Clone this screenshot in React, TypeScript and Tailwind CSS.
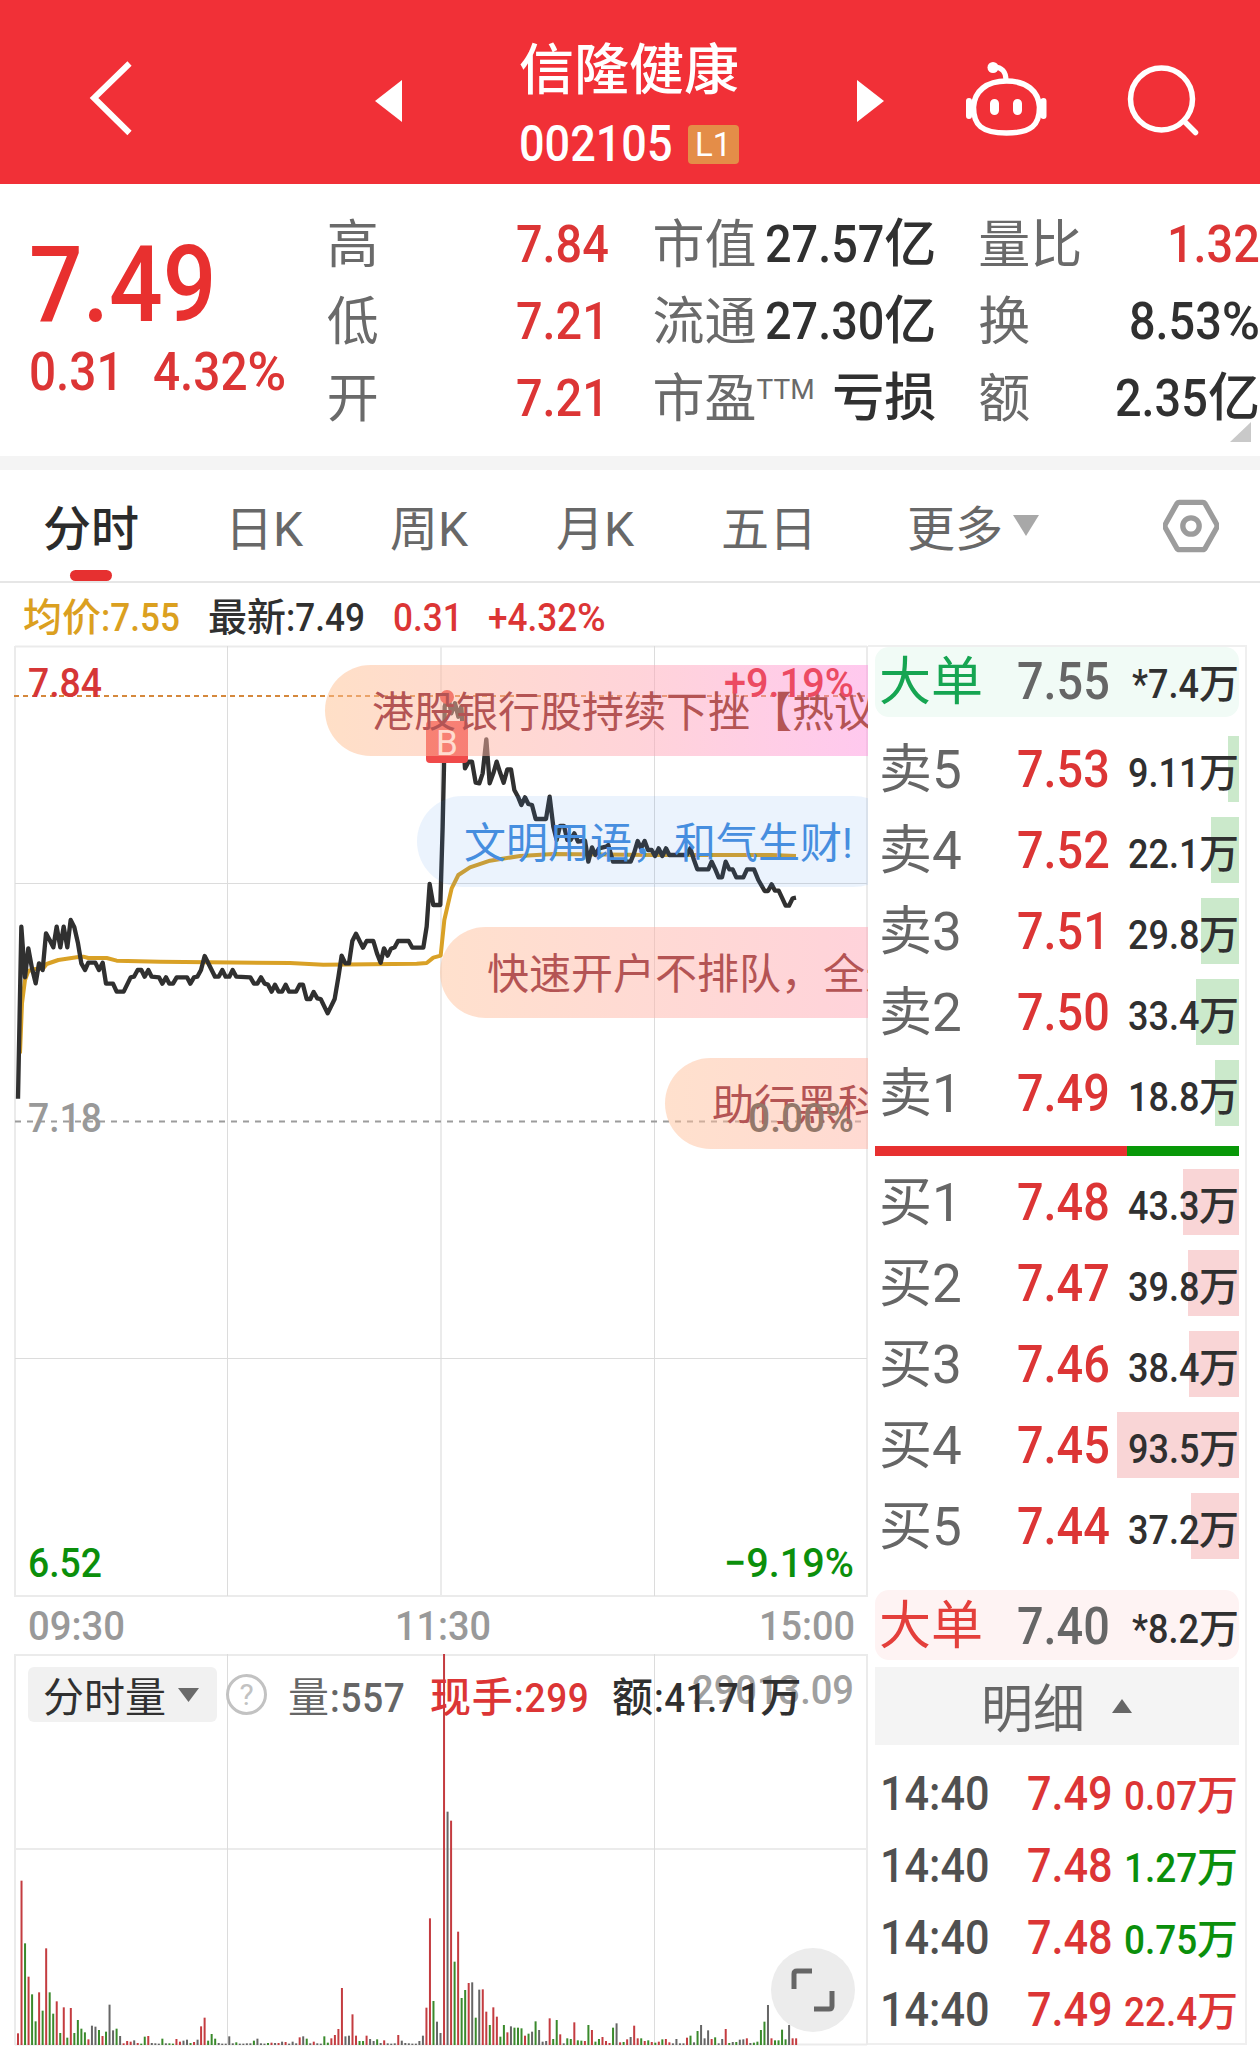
import * as React from "react";
import clsx from "clsx";

const UP = "text-[#dc3535]";
const DOWN = "text-[#0b8f0b]";

const TABS = [
  { label: "分时", width: "w-[182px]" },
  { label: "日K", width: "w-[165px]" },
  { label: "周K", width: "w-[166px]" },
  { label: "月K", width: "w-[165px]" },
  { label: "五日", width: "w-[186px]" },
];

const SELLS = [
  { label: "卖5", price: "7.53", vol: "9.11万", bar: 11 },
  { label: "卖4", price: "7.52", vol: "22.1万", bar: 28 },
  { label: "卖3", price: "7.51", vol: "29.8万", bar: 38 },
  { label: "卖2", price: "7.50", vol: "33.4万", bar: 43 },
  { label: "卖1", price: "7.49", vol: "18.8万", bar: 24 },
];

const BUYS = [
  { label: "买1", price: "7.48", vol: "43.3万", bar: 56 },
  { label: "买2", price: "7.47", vol: "39.8万", bar: 51 },
  { label: "买3", price: "7.46", vol: "38.4万", bar: 50 },
  { label: "买4", price: "7.45", vol: "93.5万", bar: 122 },
  { label: "买5", price: "7.44", vol: "37.2万", bar: 48 },
];

const DEALS = [
  { time: "14:40", price: "7.49", vol: "0.07万", up: true },
  { time: "14:40", price: "7.48", vol: "1.27万", up: false },
  { time: "14:40", price: "7.48", vol: "0.75万", up: false },
  { time: "14:40", price: "7.49", vol: "22.4万", up: true },
];

// chart series are stored in thirds of a pixel
const PRICE =
  "54,-564 64,-1080 75,-928 85,-1015 96,-955 107,-910 117,-970 128,-950 138,-1060 149,-1040 160,-1018 170,-1080 181,-1018 191,-1080 202,-1018 212,-1100 223,-1078 234,-1030 244,-970 255,-950 265,-972 286,-972 297,-950 308,-972 318,-909 339,-909 350,-885 371,-885 392,-928 402,-930 413,-950 424,-950 434,-930 445,-950 455,-930 477,-928 487,-909 498,-928 508,-909 519,-909 530,-928 561,-928 571,-909 582,-928 592,-930 603,-950 614,-992 635,-950 645,-930 656,-930 667,-950 677,-930 688,-930 698,-950 709,-930 751,-928 762,-909 772,-909 783,-928 794,-909 804,-906 815,-885 825,-906 836,-885 846,-885 857,-906 867,-885 888,-885 899,-906 909,-906 920,-863 931,-863 941,-884 952,-865 962,-863 983,-820 1004,-863 1015,-928 1025,-993 1036,-970 1047,-970 1057,-1037 1068,-1059 1089,-1017 1100,-1037 1120,-1037 1131,-1000 1142,-972 1152,-1015 1163,-993 1173,-1014 1184,-1018 1194,-1037 1226,-1037 1237,-1017 1270,-1017 1280,-1080 1289,-1208 1300,-1145 1321,-1145 1328,-1380 1332,-1560 1334,-1740 1344,-1775 1354,-1720 1365,-1750 1375,-1710 1384,-1740 1395,-1555 1406,-1575 1416,-1575 1427,-1512 1438,-1510 1448,-1540 1459,-1642 1469,-1510 1480,-1540 1490,-1575 1501,-1540 1511,-1512 1522,-1552 1533,-1552 1543,-1490 1554,-1470 1564,-1445 1575,-1468 1585,-1448 1596,-1445 1607,-1403 1638,-1403 1649,-1470 1660,-1380 1670,-1340 1680,-1382 1692,-1382 1702,-1340 1712,-1340 1723,-1360 1734,-1335 1755,-1338 1765,-1275 1776,-1318 1786,-1295 1797,-1315 1818,-1320 1825,-1325 1839,-1275 1892,-1275 1902,-1300 1913,-1337 1923,-1315 1934,-1337 1944,-1310 1955,-1310 1965,-1292 1976,-1315 1987,-1292 1998,-1315 2008,-1295 2060,-1295 2071,-1315 2082,-1280 2092,-1252 2125,-1252 2135,-1275 2146,-1252 2156,-1228 2166,-1228 2177,-1275 2188,-1252 2198,-1252 2209,-1228 2230,-1228 2241,-1252 2262,-1252 2275,-1220 2294,-1187 2304,-1187 2315,-1207 2325,-1188 2336,-1188 2347,-1165 2357,-1143 2367,-1143 2378,-1165 2388,-1167";

const AVERAGE =
  "60,-700 66,-850 75,-920 85,-947 100,-952 130,-955 140,-968 175,-980 230,-988 250,-990 265,-986 320,-986 350,-978 480,-975 870,-971 970,-966 1250,-969 1280,-971 1300,-987 1322,-993 1333,-1100 1355,-1195 1375,-1235 1410,-1258 1470,-1278 1560,-1292 1660,-1298 1960,-1295 2315,-1295 2388,-1292";

const VOLUMES =
  "35r 493r 305g 205r 152g 71g 158r 103g 290r 158g 94g 131r 36g 113r 22g 111r 36g 75g 49g 38g 17r 58k 55k 45g 27r 40g 121k 44k 49g 27k 5r 12r 10r 14k 6r 4g 25g 27r 6k 5k 4k 19g 5k 5g 4g 18r 10r 13k 16k 6g 9r 16k 56r 82r 13g 33g 19g 6k 4k 4k 26k 5k 8g 4k 4k 5k 5k 13g 19k 5k 4k 6g 7r 6k 6r 10k 9r 4k 10k 5k 23r 26k 19g 5k 10r 5k 4k 26g 7g 20r 30r 48r 171r 26k 28k 92r 28r 12g 12g 28r 18k 12k 17g 6k 14r 5k 4k 5k 30r 13k 6k 5k 4k 4k 12k 28k 112r 380r 132g 70k 36k 1173r 700k 673r 250g 340r 141g 165g 186r 188k 82g 166k 167r 100r 60g 113r 85r 25g 60g 38r 56k 52g 52g 50g 28r 34g 40k 71g 45k 10k 12k 80r 18g 75g 32r 5k 20g 18g 68r 14g 13g 12r 60g 45r 10g 18g 24r 12r 6r 52g 65k 8r 9g 17r 24k 58r 20r 20g 12r 14g 9r 7g 10r 17g 18r 8r 5k 18k 5k 5k 22r 28g 8k 42g 60k 20k 44k 18r 23g 5k 18k 48r 6g 9k 9g 16k 17k 20r 6k 7g 10g 45g 70g 120k 20r 14g 14g 46g 17g 60k 20r 20r";

const BAR_COLORS: Record<string, string> = { r: "#c43c40", g: "#3a8a2c", k: "#666666" };

const ADVANCES: Record<string, number> = { ".": 0.277, ":": 0.264, "*": 0.445, "+": 0.557 };

// narrow figures; the negative margin gives back the width taken off by the scale
function Num({ children }: { children: string }) {
  const width = [...children].reduce((sum, c) => sum + (ADVANCES[c] ?? 0.568), 0);
  return (
    <span className="inline-block origin-left scale-x-[0.9]" style={{ marginRight: `${-width * 0.1}em` }}>
      {children}
    </span>
  );
}

function Figures({ text }: { text: string }) {
  return (
    <span className="whitespace-nowrap">
      {text.split(/([\d.:*+]+)/).map((part, i) => (i % 2 ? <Num key={i}>{part}</Num> : part))}
    </span>
  );
}

function Header() {
  return (
    <header className="flex h-[184px] items-center bg-[#f13037] text-white">
      <svg className="ml-[84px] mt-3 h-[80px] w-[54px]" viewBox="84 58 54 80" fill="none" stroke="currentColor">
        <path d="M129.5 63.500 94 98l35.500 35" strokeWidth="6" />
      </svg>
      <svg className="ml-[237px] mt-[18px] h-[42px] w-[27px]" viewBox="0 0 27 42" fill="currentColor">
        <path d="M27 0v42L0 21z" />
      </svg>
      <div className="ml-[102px] flex w-[250px] flex-col items-center pt-[19px]">
        <h1 className="text-[55px] font-medium leading-[62px]">信隆健康</h1>
        <div className="mt-[23px] flex h-[40px] items-center gap-[15px]">
          <span className="text-[50px] font-medium leading-none">
            <Figures text="002105" />
          </span>
          <span className="flex h-[39px] w-[51px] items-center justify-center rounded-[4px] bg-[#e48d48] text-[33px] leading-none">
            L1
          </span>
        </div>
      </div>
      <svg className="ml-[103px] mt-[18px] h-[42px] w-[27px]" viewBox="0 0 27 42" fill="currentColor">
        <path d="M0 0v42l27-21z" />
      </svg>
      <svg className="ml-[78px] mt-[14px] h-[80px] w-[88px]" viewBox="961 59 88 80" fill="none" stroke="currentColor">
        <path
          d="M1005.500 81c20 0 32 10 33 26 0 18-8 26-33 26s-33-8-33-26c1-16 13-26 33-26z"
          strokeWidth="5.500"
        />
        <path d="M968 101v15M1042.500 101v15" strokeWidth="6" strokeLinecap="round" />
        <path d="M1005 80c0-8-4-13-12-13" strokeWidth="5" />
        <circle cx="992" cy="67.500" r="5.500" fill="currentColor" stroke="none" />
        <path d="M993.500 103.500v7M1016.500 103.500v7" strokeWidth="9" strokeLinecap="round" />
      </svg>
      <svg className="ml-[73px] mt-[14px] h-[80px] w-[80px]" viewBox="1122 59 80 80" fill="none" stroke="currentColor">
        <circle cx="1160.500" cy="99" r="31" strokeWidth="5.500" />
        <path d="m1183 121 11.500 11.500" strokeWidth="5.500" strokeLinecap="round" />
      </svg>
    </header>
  );
}

interface StatProps {
  label: React.ReactNode;
  value: string;
  up?: boolean;
}

function Stat({ label, value, up }: StatProps) {
  return (
    <div className="flex h-[77px] items-center justify-between">
      <span className="pt-[2px] text-[#6a6a6a]">{label}</span>
      <span className={clsx("font-medium", up ? UP : "text-[#303030]")}>
        <Figures text={value} />
      </span>
    </div>
  );
}

function Quote() {
  return (
    <section className="relative flex h-[272px] pt-[22px] text-[52px] leading-none">
      <div className={clsx("w-[327px] pl-[29px] font-medium", UP)}>
        <div className="mt-[28px] text-[105px] leading-[104px] text-[#e8302f]">
          <Figures text="7.49" />
        </div>
        <div className="mt-[7px] flex gap-[29px] text-[53px] leading-[54px]">
          <Figures text="0.31" />
          <Figures text="4.32%" />
        </div>
      </div>
      <div className="w-[282px]">
        <Stat label="高" value="7.84" up />
        <Stat label="低" value="7.21" up />
        <Stat label="开" value="7.21" up />
      </div>
      <div className="ml-[44px] w-[284px]">
        <Stat label="市值" value="27.57亿" />
        <Stat label="流通" value="27.30亿" />
        <Stat
          label={
            <>
              市盈<span className="relative top-[-18px] text-[28px]">TTM</span>
            </>
          }
          value="亏损"
        />
      </div>
      <div className="ml-[42px] w-[282px]">
        <Stat label="量比" value="1.32" up />
        <Stat label="换" value="8.53%" />
        <Stat label="额" value="2.35亿" />
      </div>
      <svg className="absolute bottom-[14px] right-[9px] h-[20px] w-[21px]" viewBox="0 0 21 20" fill="#c9c9c9">
        <path d="M21 0v20H0z" />
      </svg>
    </section>
  );
}

function Tabs() {
  return (
    <nav className="flex h-[113px] items-center border-b-2 border-[#e6e6e6] pl-[43px] text-[48px] leading-none text-[#686868]">
      {TABS.map((tab, i) => (
        <div
          key={tab.label}
          className={clsx(
            "relative flex h-full items-center pt-[8px]",
            tab.width,
            i === 0 && "font-medium text-[#2b2b2b]",
          )}
        >
          {tab.label}
          {i === 0 && <span className="absolute bottom-0 left-[27px] h-[11px] w-[42px] rounded-[6px] bg-[#e63030]" />}
        </div>
      ))}
      <span className="pt-[8px]">更多</span>
      <svg className="ml-[10px] h-[21px] w-[26px]" viewBox="0 0 26 21" fill="#a8a8a8">
        <path d="M0 0h26L13 21z" />
      </svg>
      <svg className="ml-[124px] h-[54px] w-[56px]" viewBox="1 1 58 56" fill="none" stroke="#9c9c9c" strokeWidth="5.500">
        <path d="M18 4.500h24q2 0 3 2L56 26q2 3 0 6L45 51.500q-1 2-3 2H18q-2 0-3-2L4 32q-2-3 0-6L15 6.500q1-2 3-2z" />
        <circle cx="30" cy="29" r="8.500" />
      </svg>
    </nav>
  );
}

function InfoLine() {
  return (
    <div className="flex h-[62px] items-center pl-[23px] pt-[9px] text-[39px] font-medium leading-none">
      <span className="w-[185px] text-[#dba01f]">
        <Figures text="均价:7.55" />
      </span>
      <span className="w-[185px] text-[#303030]">
        <Figures text="最新:7.49" />
      </span>
      <span className={clsx("w-[95px]", UP)}>
        <Figures text="0.31" />
      </span>
      <span className={UP}>
        <Figures text="+4.32%" />
      </span>
    </div>
  );
}

interface AxisLabelProps {
  x: number;
  y: number;
  width: number;
  fill: string;
  children: string;
}

function AxisLabel({ x, y, width, fill, children }: AxisLabelProps) {
  return (
    <text
      x={x}
      y={y}
      textLength={width}
      lengthAdjust="spacingAndGlyphs"
      fill={fill}
      className="text-[41px] font-medium"
    >
      {children}
    </text>
  );
}

function Pill({ className, children }: { className: string; children: string }) {
  return (
    <div
      className={clsx(
        "absolute flex h-[91px] items-center whitespace-nowrap rounded-l-full pt-[4px] pl-[47px] text-[42px] leading-none",
        className,
      )}
    >
      {children}
    </div>
  );
}

function PriceChart() {
  return (
    <div className="relative h-[1009px] w-[868px] overflow-hidden">
      <svg className="block h-full w-full" viewBox="0 645 868 1009" fill="none">
        <path d="M15 646.500H867M15 1596H867M15 646V1597M441 646V1597M867 646V1597" stroke="#ebebeb" strokeWidth="2" />
        <path d="M15 883.500H867M15 1358.500H867M227.500 646V1596M654.500 646V1596" stroke="#dcdcdc" />
        <path d="M14 696H867" stroke="#d5883c" strokeWidth="2" strokeDasharray="5 4" />
        <path d="M15 1121.500H867" stroke="#9c9c9c" strokeWidth="2" strokeDasharray="6 6" />
        <g transform="translate(0 1286.667) scale(.33333)" strokeLinejoin="round">
          <polyline points={AVERAGE} stroke="#d9a126" strokeWidth="12" />
          <polyline points={PRICE} stroke="#303030" strokeWidth="13" />
        </g>
        <circle cx="447" cy="697" r="7" fill="#e83c3c" />
        <rect x="426" y="721" width="42" height="42" rx="4" fill="#f04a4a" />
        <text x="436" y="755" fill="#fff" className="text-[35px]">
          B
        </text>
      </svg>
      <Pill className="left-[325px] top-[20px] w-[700px] bg-linear-to-r from-[#ffc08f]/50 via-[#ffa8b4]/50 via-45% to-[#ff80f8]/50 text-[#b45454]">
        港股银行股持续下挫【热议】
      </Pill>
      <Pill className="left-[417px] top-[151px] w-[482px] rounded-r-full bg-[#3f87f0]/10 text-[#468edf]">
        文明用语，和气生财!
      </Pill>
      <Pill className="left-[440px] top-[282px] w-[800px] bg-linear-to-r from-[#ffc29b]/50 via-[#ffa8b4]/50 via-50% to-[#ff98dc]/50 text-[#b45454]">
        快速开户不排队，全天
      </Pill>
      <Pill className="left-[665px] top-[413px] w-[500px] bg-linear-to-r from-[#ffc29b]/50 to-[#ffa0b4]/50 text-[#b45454]">
        助行黑科技
      </Pill>
      <svg className="absolute left-0 top-0 h-full w-full" viewBox="0 645 868 1009">
        <AxisLabel x={28} y={697} width={74} fill="#d63636">7.84</AxisLabel>
        <AxisLabel x={724} y={697} width={130} fill="#ec4a62">+9.19%</AxisLabel>
        <AxisLabel x={28} y={1132} width={74} fill="#999999">7.18</AxisLabel>
        <AxisLabel x={748} y={1132} width={106} fill="#93786a">0.00%</AxisLabel>
        <AxisLabel x={28} y={1577} width={74} fill="#0b8f0b">6.52</AxisLabel>
        <AxisLabel x={724} y={1577} width={130} fill="#0b8f0b">−9.19%</AxisLabel>
        <AxisLabel x={28} y={1640} width={97} fill="#999999">09:30</AxisLabel>
        <AxisLabel x={395} y={1640} width={96} fill="#999999">11:30</AxisLabel>
        <AxisLabel x={759} y={1640} width={96} fill="#999999">15:00</AxisLabel>
      </svg>
    </div>
  );
}

function VolumeChart() {
  return (
    <div className="relative h-[400px] w-[868px] pt-[13px]">
      <svg className="absolute inset-0 h-full w-full" viewBox="0 1654 868 400">
        <path d="M15 1655H867M15 1849H867M15 2044.500H867M15 1654V2045M867 1654V2045" stroke="#ebebeb" strokeWidth="2" />
        <path d="M227.500 1654V2044M654.500 1654V2044" stroke="#dcdcdc" />
        <AxisLabel x={692} y={1704} width={162} fill="#a0a0a0">29013.09</AxisLabel>
        {VOLUMES.split(" ").map((item, i) => {
          const h = parseInt(item, 10) / 3;
          return (
            <rect key={i} x={17 + i * 3.521} y={2045 - h} width="2" height={h} fill={BAR_COLORS[item.slice(-1)]} />
          );
        })}
      </svg>
      <div className="relative flex h-[55px] items-center pl-[28px] text-[41px] font-medium leading-none">
        <div className="flex h-[55px] w-[189px] items-center gap-[12px] rounded-[6px] bg-[#f1f1f1] pl-[15px] font-normal text-[#303030]">
          <span className="pt-[8px]">分时量</span>
          <svg className="h-[14px] w-[21px]" viewBox="0 0 21 14" fill="#6a6a6a">
            <path d="M0 0h21L10.500 14z" />
          </svg>
        </div>
        <div className="ml-[9px] flex h-[41px] w-[41px] items-center justify-center rounded-full border-[3px] border-[#c2c2c2] text-[30px] font-normal text-[#c2c2c2]">
          ?
        </div>
        <span className="ml-[21px] w-[142px] pt-[7px] tracking-[0.8px] text-[#666]">
          <span className="font-normal">量</span>
          <Figures text=":557" />
        </span>
        <span className={clsx("w-[182px] pt-[7px] tracking-[0.8px]", UP)}>
          <Figures text="现手:299" />
        </span>
        <span className="pt-[7px] tracking-[0.5px] text-[#303030]">
          <Figures text="额:41.71万" />
        </span>
      </div>
      <div className="absolute left-[771px] top-[294px] flex h-[84px] w-[84px] items-center justify-center rounded-full bg-[#ececec]">
        <svg className="h-[44px] w-[44px]" viewBox="0 0 44 44" fill="none" stroke="#666" strokeWidth="5">
          <path d="M21 3H6q-3 0-3 3v15M23 41h15q3 0 3-3V23" />
        </svg>
      </div>
    </div>
  );
}

function BigOrder({ buy, price, vol }: { buy?: boolean; price: string; vol: string }) {
  return (
    <div
      className={clsx(
        "flex h-[70px] items-center rounded-[14px] pl-[4px] leading-none",
        buy ? "bg-[#fef3f3]" : "bg-[#f1fbf6]",
      )}
    >
      <span className={clsx("w-[138px] text-[52px]", buy ? "pt-[4px] text-[#e43f3b]" : "pt-px text-[#16a552]")}>
        大单
      </span>
      <span className={clsx("text-[52px] font-medium text-[#666]", buy && "pt-[3px]")}>
        <Figures text={price} />
      </span>
      <span className={clsx("ml-auto text-[40px] font-medium text-[#303030]", buy ? "pt-[10px]" : "pt-[6px]")}>
        <Figures text={vol} />
      </span>
    </div>
  );
}

interface LevelProps {
  label: string;
  price: string;
  vol: string;
  bar: number;
  buy?: boolean;
}

function Level({ label, price, vol, bar, buy }: LevelProps) {
  return (
    <div className="relative flex h-[66px] items-center pl-[4px] leading-none">
      <div
        className={clsx("absolute inset-y-0 right-0", buy ? "bg-[#f9d5d6]" : "bg-[#cbe9cb]")}
        style={{ width: bar }}
      />
      <span className="w-[138px] pt-[3px] text-[53px] text-[#666]">{label}</span>
      <span className={clsx("pt-[2px] text-[52px] font-medium", UP)}>
        <Figures text={price} />
      </span>
      <span className="relative ml-auto pt-[9px] text-[40px] font-medium text-[#303030]">
        <Figures text={vol} />
      </span>
    </div>
  );
}

function OrderBook() {
  return (
    <aside className="h-[1400px] w-[379px] border-2 border-l-0 border-[#efefef] pl-[7px] pr-[6px]">
      <BigOrder price="7.55" vol="*7.4万" />
      <div className="mt-[19px] flex flex-col gap-[15px]">
        {SELLS.map((row) => (
          <Level key={row.label} {...row} />
        ))}
      </div>
      <div className="mt-[20px] flex h-[10px]">
        <div className="w-[252px] bg-[#e73030]" />
        <div className="flex-1 bg-[#089808]" />
      </div>
      <div className="mt-[13px] flex flex-col gap-[15px]">
        {BUYS.map((row) => (
          <Level key={row.label} {...row} buy />
        ))}
      </div>
      <div className="mt-[31px]">
        <BigOrder price="7.40" vol="*8.2万" buy />
      </div>
      <div className="mt-[7px] flex h-[78px] items-center gap-[27px] bg-[#f4f4f4] pl-[106px] text-[52px] leading-none text-[#666]">
        <span className="pt-[10px]">明细</span>
        <svg className="h-[14px] w-[20px]" viewBox="0 0 20 14" fill="#666">
          <path d="M10 0 20 14H0z" />
        </svg>
      </div>
      <div className="mt-[13px]">
        {DEALS.map((deal, i) => (
          <div key={i} className="flex h-[72px] items-center pl-[5px] pr-px font-medium leading-none">
            <span className="w-[147px] text-[48px] text-[#505050]">
              <Figures text={deal.time} />
            </span>
            <span className={clsx("text-[48px]", UP)}>
              <Figures text={deal.price} />
            </span>
            <span className={clsx("ml-auto pt-[5px] text-[41px]", deal.up ? UP : DOWN)}>
              <Figures text={deal.vol} />
            </span>
          </div>
        ))}
      </div>
    </aside>
  );
}

export default function App() {
  return (
    <div className="h-[2054px] w-[1260px] overflow-hidden bg-white font-['Roboto','Noto_Sans_CJK_SC',sans-serif]">
      <Header />
      <Quote />
      <div className="h-[14px] bg-[#f4f4f4]" />
      <Tabs />
      <InfoLine />
      <main className="flex">
        <div>
          <PriceChart />
          <VolumeChart />
        </div>
        <OrderBook />
      </main>
    </div>
  );
}
